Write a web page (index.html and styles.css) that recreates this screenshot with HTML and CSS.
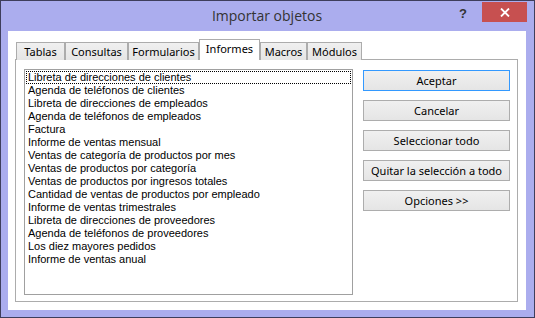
FILE: index.html
```html
<!DOCTYPE html>
<html>

<head>
    <title>Importar objetos</title>
    <link rel="stylesheet" href="styles.css">
</head>

<body>
    <div class="window">

        <div class="titlebar">
            <div class="title">Importar objetos</div>
            <div class="help">?</div>
            <div class="close">
                <svg width="10" height="9" viewBox="0 0 10 9">
                    <path d="M1 0.5 L9 8.5 M9 0.5 L1 8.5" stroke="#fff" stroke-width="1.8" fill="none"/>
                </svg>
            </div>
        </div>

        <div class="client">

            <div class="tabs">
                <div class="tab tab-tablas">Tablas</div>
                <div class="tab tab-consultas">Consultas</div>
                <div class="tab tab-formularios">Formularios</div>
                <div class="tab tab-informes active">Informes</div>
                <div class="tab tab-macros">Macros</div>
                <div class="tab tab-modulos">Módulos</div>
            </div>

            <div class="panel">
                <div class="listbox">
                    <div class="item focused">Libreta de direcciones de clientes</div>
                    <div class="item">Agenda de teléfonos de clientes</div>
                    <div class="item">Libreta de direcciones de empleados</div>
                    <div class="item">Agenda de teléfonos de empleados</div>
                    <div class="item">Factura</div>
                    <div class="item">Informe de ventas mensual</div>
                    <div class="item">Ventas de categoría de productos por mes</div>
                    <div class="item">Ventas de productos por categoría</div>
                    <div class="item">Ventas de productos por ingresos totales</div>
                    <div class="item">Cantidad de ventas de productos por empleado</div>
                    <div class="item">Informe de ventas trimestrales</div>
                    <div class="item">Libreta de direcciones de proveedores</div>
                    <div class="item">Agenda de teléfonos de proveedores</div>
                    <div class="item">Los diez mayores pedidos</div>
                    <div class="item">Informe de ventas anual</div>
                </div>

                <div class="buttons">
                    <div class="btn default">Aceptar</div>
                    <div class="btn">Cancelar</div>
                    <div class="btn">Seleccionar todo</div>
                    <div class="btn">Quitar la selección a todo</div>
                    <div class="btn">Opciones &gt;&gt;</div>
                </div>
            </div>

        </div>
    </div>
</body>

</html>
```

FILE: styles.css
```css
html, body {
    margin: 0;
    padding: 0;
    background: #ffffff;
}

.window {
    width: 535px;
    height: 318px;
    box-sizing: border-box;
    border: 1px solid #3e3e5c;
    background-color: #abadee;
    padding: 0 8px 7px 7px;
    display: flex;
    flex-direction: column;
}

.titlebar {
    height: 30px;
    position: relative;
    flex: none;
}

.title {
    text-align: center;
    font-family: "Open Sans", sans-serif;
    font-size: 14px;
    color: #333333;
    line-height: 30px;
}

.help {
    position: absolute;
    top: 5px;
    left: 451px;
    font-family: "Liberation Sans", sans-serif;
    font-weight: bold;
    font-size: 13px;
    color: #333333;
}

.close {
    position: absolute;
    top: 1px;
    right: -1px;
    width: 45px;
    height: 20px;
    background-color: #c75050;
    display: flex;
    justify-content: center;
    align-items: center;
}

.client {
    flex: 1;
    background-color: #ffffff;
    padding: 8px 8px 8px 7px;
    display: flex;
    flex-direction: column;
}

.tabs {
    display: flex;
    align-items: flex-end;
    height: 21px;
    padding-left: 1px;
    position: relative;
    z-index: 1;
    margin-bottom: -1px;
}

.tab {
    height: 18px;
    box-sizing: border-box;
    border: 1px solid #acacac;
    border-bottom: none;
    background: linear-gradient(#f0f0f0, #e5e5e5);
    font-family: "Noto Sans", sans-serif;
    font-size: 11px;
    line-height: 17px;
    color: #000000;
    text-align: center;
    white-space: nowrap;
}

.tab + .tab {
    margin-left: 0;
}

.tab-tablas { width: 49px; }
.tab-consultas { width: 63px; }
.tab-formularios { width: 71px; }
.tab-informes { width: 61px; }
.tab-macros { width: 47px; }
.tab-modulos { width: 55px; }

.tab.active {
    height: 21px;
    background: #ffffff;
    line-height: 17px;
}

.panel {
    flex: 1;
    border: 1px solid #acacac;
    padding: 9px 7px 6px 8px;
    display: flex;
    gap: 10px;
}

.listbox {
    width: 329px;
    box-sizing: border-box;
    border: 1px solid #a0a0a0;
    padding: 1px;
}

.item {
    height: 13px;
    font-family: "Liberation Sans", sans-serif;
    font-size: 11px;
    line-height: 13px;
    color: #000000;
    padding-left: 2px;
    white-space: nowrap;
}

.item.focused {
    outline: 1px dotted #000000;
    outline-offset: -1px;
}

.buttons {
    flex: 1;
    display: flex;
    flex-direction: column;
    gap: 9px;
    padding-top: 1px;
}

.btn {
    height: 21px;
    box-sizing: border-box;
    border: 1px solid #adadad;
    background: linear-gradient(#f0f0f0, #e5e5e5);
    font-family: "Noto Sans", sans-serif;
    font-size: 11px;
    line-height: 19px;
    text-align: center;
    color: #000000;
    white-space: nowrap;
}

.btn.default {
    border-color: #3399ff;
}
```
